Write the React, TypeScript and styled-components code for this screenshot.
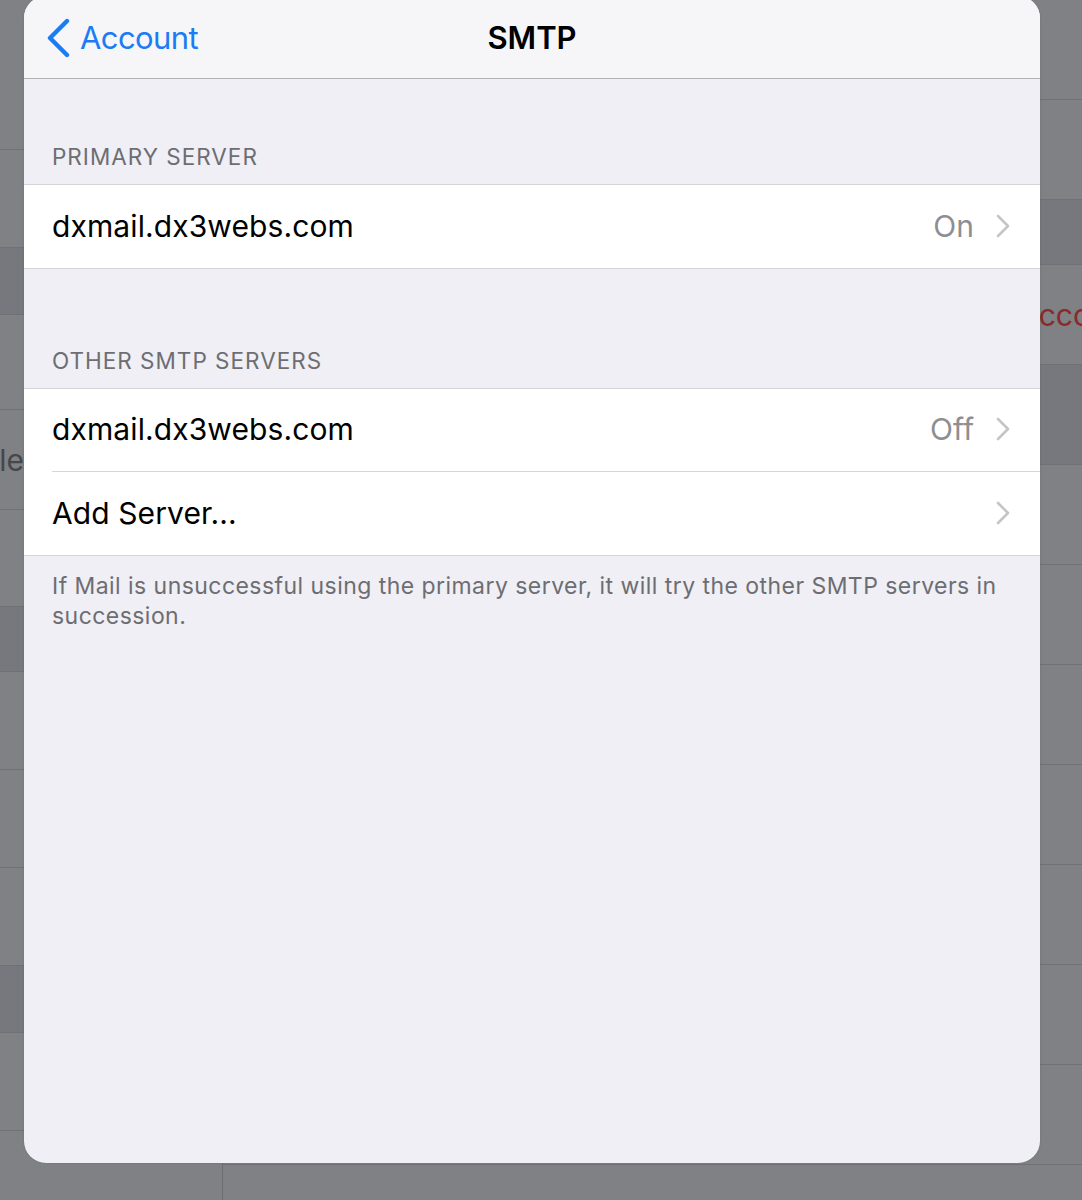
import React from "react";
import styled, { createGlobalStyle } from "styled-components";

const Global = createGlobalStyle`
  html, body { margin: 0; padding: 0; }
  body {
    width: 1082px;
    height: 1200px;
    overflow: hidden;
    font-family: Inter, "Noto Sans", "Liberation Sans", sans-serif;
    -webkit-font-smoothing: antialiased;
  }
`;

const Stage = styled.div`
  position: relative;
  width: 1082px;
  height: 1200px;
  overflow: hidden;
  background: #7f8184;
`;

/* Dimmed underlying page */
const Backdrop = styled.div`
  display: grid;
  grid-template-columns: 223px 1fr;
  height: 100%;
`;

const BackColumn = styled.div<{ $divider?: boolean }>`
  display: flex;
  flex-direction: column;
  border-right: ${(p) => (p.$divider ? "1px solid #6c6e72" : "none")};
`;

const BackRow = styled.div<{ $h: number; $tone?: "dark" | "normal"; $side: "left" | "right" }>`
  height: ${(p) => p.$h}px;
  flex: none;
  border-bottom: 1px solid #6f7175;
  background: ${(p) => (p.$tone === "dark" ? "#76787e" : "#7f8184")};
  display: flex;
  align-items: center;
  justify-content: ${(p) => (p.$side === "left" ? "flex-end" : "flex-start")};
  padding-left: ${(p) => (p.$side === "left" ? 0 : 795)}px;
  box-sizing: border-box;
  font-size: 30px;
  overflow: hidden;
  white-space: nowrap;
`;

const BackText = styled.span<{ $color: string; $shift: number }>`
  color: ${(p) => p.$color};
  margin-right: ${(p) => p.$shift}px;
`;

/* Modal sheet */
const Sheet = styled.div`
  position: absolute;
  left: 24px;
  top: -4px;
  width: 1016px;
  height: 1167px;
  border-radius: 22px;
  overflow: hidden;
  background: #efeff5;
  display: flex;
  flex-direction: column;
  box-shadow: 0 0 2px rgba(0, 0, 0, 0.15);
`;

const NavBar = styled.div`
  height: 83px;
  flex: none;
  box-sizing: border-box;
  padding-top: 1px;
  background: #f6f6f8;
  border-bottom: 1px solid #b1b1b4;
  display: grid;
  grid-template-columns: 1fr auto 1fr;
  align-items: center;
`;

const BackButton = styled.div`
  display: flex;
  align-items: center;
  gap: 8px;
  padding-left: 22px;
  color: #1b7cf4;
  font-size: 31px;
  letter-spacing: -0.6px;
`;

const Title = styled.div`
  font-size: 31px;
  font-weight: 600;
  color: #000;
`;

const SectionHeader = styled.div<{ $top: number }>`
  padding: ${(p) => p.$top}px 28px 13px;
  font-size: 22.5px;
  letter-spacing: 1px;
  color: #6d6d72;
  text-transform: uppercase;
  line-height: 28px;
`;

const Group = styled.div`
  background: #fff;
  border-top: 1px solid #d3d3d8;
  border-bottom: 1px solid #d3d3d8;
`;

const Cell = styled.div<{ $last?: boolean }>`
  height: 83px;
  margin-left: 28px;
  padding-right: 30px;
  padding-bottom: 2px;
  display: flex;
  align-items: center;
  box-sizing: border-box;
  border-bottom: ${(p) => (p.$last ? "none" : "1px solid #d6d6da")};
`;

const CellLabel = styled.div`
  flex: 1;
  font-size: 30px;
  color: #000;
  letter-spacing: 0.1px;
`;

const CellValue = styled.div`
  font-size: 30px;
  color: #8e8e93;
  margin-right: 22px;
`;

const Footer = styled.div`
  padding: 15px 28px 0;
  font-size: 23px;
  line-height: 30px;
  color: #6d6d72;
  letter-spacing: 0.45px;
`;

const Chevron = () => (
  <svg width="14" height="24" viewBox="0 0 14 24" fill="none">
    <path d="M2 2 L12 12 L2 22" stroke="#c4c4c9" strokeWidth="2.6" strokeLinecap="round" strokeLinejoin="round" />
  </svg>
);

const BackChevron = () => (
  <svg width="26" height="40" viewBox="0 0 26 40" fill="none">
    <path d="M21 3 L4 20 L21 37" stroke="#1b7cf4" strokeWidth="4.4" strokeLinecap="round" strokeLinejoin="round" />
  </svg>
);

type BgRow = { h: number; tone?: "dark"; text?: string };

const leftRows: BgRow[] = [
  { h: 150 },
  { h: 98 },
  { h: 67, tone: "dark" },
  { h: 95 },
  { h: 100, text: "ble" },
  { h: 97 },
  { h: 65, tone: "dark" },
  { h: 98 },
  { h: 98 },
  { h: 98 },
  { h: 67, tone: "dark" },
  { h: 98 },
  { h: 98 },
];

const rightRows: BgRow[] = [
  { h: 100 },
  { h: 100 },
  { h: 65, tone: "dark" },
  { h: 100, text: "Acco" },
  { h: 100, tone: "dark" },
  { h: 100 },
  { h: 100 },
  { h: 100 },
  { h: 100 },
  { h: 100 },
  { h: 100 },
  { h: 100 },
];

export default function App() {
  return (
    <>
      <Global />
      <Stage>
        <Backdrop>
          <BackColumn $divider>
            {leftRows.map((r, i) => (
              <BackRow key={i} $h={r.h} $tone={r.tone} $side="left">
                {r.text && (
                  <BackText $color="#45474b" $shift={198}>
                    {r.text}
                  </BackText>
                )}
              </BackRow>
            ))}
          </BackColumn>
          <BackColumn>
            {rightRows.map((r, i) => (
              <BackRow key={i} $h={r.h} $tone={r.tone} $side="right">
                {r.text && (
                  <BackText $color="#8a2a2a" $shift={0}>
                    {r.text}
                  </BackText>
                )}
              </BackRow>
            ))}
          </BackColumn>
        </Backdrop>

        <Sheet>
          <NavBar>
            <BackButton>
              <BackChevron />
              <span>Account</span>
            </BackButton>
            <Title>SMTP</Title>
            <div />
          </NavBar>

          <SectionHeader $top={64}>Primary Server</SectionHeader>
          <Group>
            <Cell $last>
              <CellLabel>dxmail.dx3webs.com</CellLabel>
              <CellValue>On</CellValue>
              <Chevron />
            </Cell>
          </Group>

          <SectionHeader $top={78}>Other SMTP Servers</SectionHeader>
          <Group>
            <Cell>
              <CellLabel>dxmail.dx3webs.com</CellLabel>
              <CellValue>Off</CellValue>
              <Chevron />
            </Cell>
            <Cell $last>
              <CellLabel>Add Server...</CellLabel>
              <Chevron />
            </Cell>
          </Group>

          <Footer>
            If Mail is unsuccessful using the primary server, it will try the other SMTP servers in succession.
          </Footer>
        </Sheet>
      </Stage>
    </>
  );
}
